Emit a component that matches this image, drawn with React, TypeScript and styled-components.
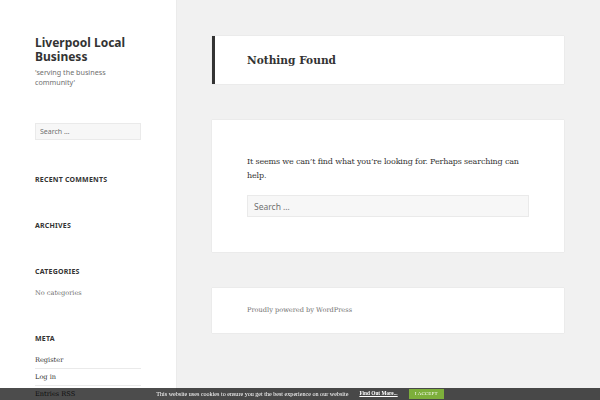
import React from "react";
import styled, { createGlobalStyle } from "styled-components";

const serif = `"DejaVu Serif", "Liberation Serif", serif`;
const sans = `"Noto Sans", "DejaVu Sans", sans-serif`;

const Global = createGlobalStyle`
  html, body { margin: 0; padding: 0; height: 100%; }
  body {
    background: #f1f1f1;
    overflow: hidden;
    font-family: ${sans};
    color: #333;
  }
  * { box-sizing: border-box; }
`;

const Page = styled.div`
  display: grid;
  grid-template-columns: 176px 1fr;
  height: 100vh;
  overflow: hidden;
`;

const Sidebar = styled.aside`
  background: #fff;
  box-shadow: 0 0 1px rgba(0, 0, 0, 0.15);
  padding: 36px 35px 0;
  display: flex;
  flex-direction: column;
  overflow: hidden;
`;

const SiteTitle = styled.h1`
  margin: 0;
  font: 700 12px/14px ${sans};
  color: #333;
`;

const Tagline = styled.p`
  margin: 2.5px 0 0;
  font: 400 7.2px/10px ${sans};
  color: #707070;
`;

const SearchField = styled.input<{ $size: "small" | "large" }>`
  display: block;
  flex: none;
  width: 100%;
  margin: ${(p) => (p.$size === "small" ? "36.5px 0 35px" : "12px 0 0")};
  height: ${(p) => (p.$size === "small" ? "17px" : "22px")};
  padding: ${(p) => (p.$size === "small" ? "0 4px" : "0 6px")};
  background: #f7f7f7;
  border: 1px solid #eaeaea;
  border-radius: 0;
  font: 400 ${(p) => (p.$size === "small" ? "7px" : "8.5px")} ${sans};
  color: #333;
  outline: none;
  &::placeholder { color: #707070; opacity: 1; }
`;

const Widget = styled.section`
  margin-bottom: 33px;
`;

const WidgetTitle = styled.h2<{ $empty?: boolean }>`
  margin: 0 0 ${(p) => (p.$empty ? "3px" : "8px")};
  font: 700 7px/10px ${sans};
  letter-spacing: 0.03em;
  text-transform: uppercase;
  color: #333;
`;

const WidgetList = styled.ul`
  list-style: none;
  margin: 0;
  padding: 0;
`;

const WidgetItem = styled.li<{ $muted?: boolean }>`
  font: 400 6.6px/12px ${serif};
  color: ${(p) => (p.$muted ? "#707070" : "#333")};
  padding: 2px 0;
  & + & { border-top: 1px solid #eaeaea; }
`;

const Main = styled.main`
  padding: 36px 36px 0;
  display: flex;
  flex-direction: column;
  gap: 36px;
`;

const HeaderCard = styled.header`
  height: 48px;
  background: #fff;
  border-left: 3px solid #333;
  box-shadow: 0 0 1px rgba(0, 0, 0, 0.15);
  padding: 0 32px;
  display: flex;
  align-items: center;
`;

const PageTitle = styled.h1`
  margin: 0;
  font: 700 10.6px/1 ${serif};
  color: #333;
`;

const ContentCard = styled.article`
  background: #fff;
  box-shadow: 0 0 1px rgba(0, 0, 0, 0.15);
  padding: 35px;
`;

const Paragraph = styled.p`
  margin: 0;
  font: 400 8px/14px ${serif};
  letter-spacing: -0.02em;
  color: #333;
`;

const FooterCard = styled.footer`
  height: 45px;
  background: #fff;
  box-shadow: 0 0 1px rgba(0, 0, 0, 0.15);
  padding: 0 35px;
  display: flex;
  align-items: center;
`;

const FooterText = styled.span`
  font: 400 6.6px/1 ${serif};
  color: #707070;
`;

const CookieBar = styled.div`
  position: fixed;
  left: 0;
  right: 0;
  bottom: 0;
  height: 12px;
  background: rgba(0, 0, 0, 0.7);
  display: flex;
  align-items: center;
  justify-content: center;
  gap: 11px;
  font: 400 6.1px/1 "Liberation Serif", serif;
  color: #fff;
`;

const CookieLink = styled.a`
  color: #fff;
  font-weight: 700;
  font-size: 5.3px;
  text-decoration: underline;
`;

const AcceptButton = styled.button`
  height: 10px;
  padding: 0 6px;
  border: 0;
  background: #7daf3b;
  color: #fff;
  font: 400 5px/10px "Liberation Serif", serif;
  letter-spacing: 0.03em;
`;

export default function App() {
  return (
    <>
      <Global />
      <Page>
        <Sidebar>
          <SiteTitle>Liverpool Local Business</SiteTitle>
          <Tagline>'serving the business community'</Tagline>
          <SearchField $size="small" placeholder="Search …" />
          <Widget>
            <WidgetTitle $empty>Recent Comments</WidgetTitle>
          </Widget>
          <Widget>
            <WidgetTitle $empty>Archives</WidgetTitle>
          </Widget>
          <Widget>
            <WidgetTitle>Categories</WidgetTitle>
            <WidgetList>
              <WidgetItem $muted>No categories</WidgetItem>
            </WidgetList>
          </Widget>
          <Widget>
            <WidgetTitle>Meta</WidgetTitle>
            <WidgetList>
              <WidgetItem>Register</WidgetItem>
              <WidgetItem>Log in</WidgetItem>
              <WidgetItem>Entries RSS</WidgetItem>
            </WidgetList>
          </Widget>
        </Sidebar>
        <Main>
          <HeaderCard>
            <PageTitle>Nothing Found</PageTitle>
          </HeaderCard>
          <ContentCard>
            <Paragraph>
              It seems we can’t find what you’re looking for. Perhaps searching can help.
            </Paragraph>
            <SearchField $size="large" placeholder="Search …" />
          </ContentCard>
          <FooterCard>
            <FooterText>Proudly powered by WordPress</FooterText>
          </FooterCard>
        </Main>
      </Page>
      <CookieBar>
        <span>This website uses cookies to ensure you get the best experience on our website</span>
        <CookieLink href="#">Find Out More...</CookieLink>
        <AcceptButton>I ACCEPT</AcceptButton>
      </CookieBar>
    </>
  );
}
